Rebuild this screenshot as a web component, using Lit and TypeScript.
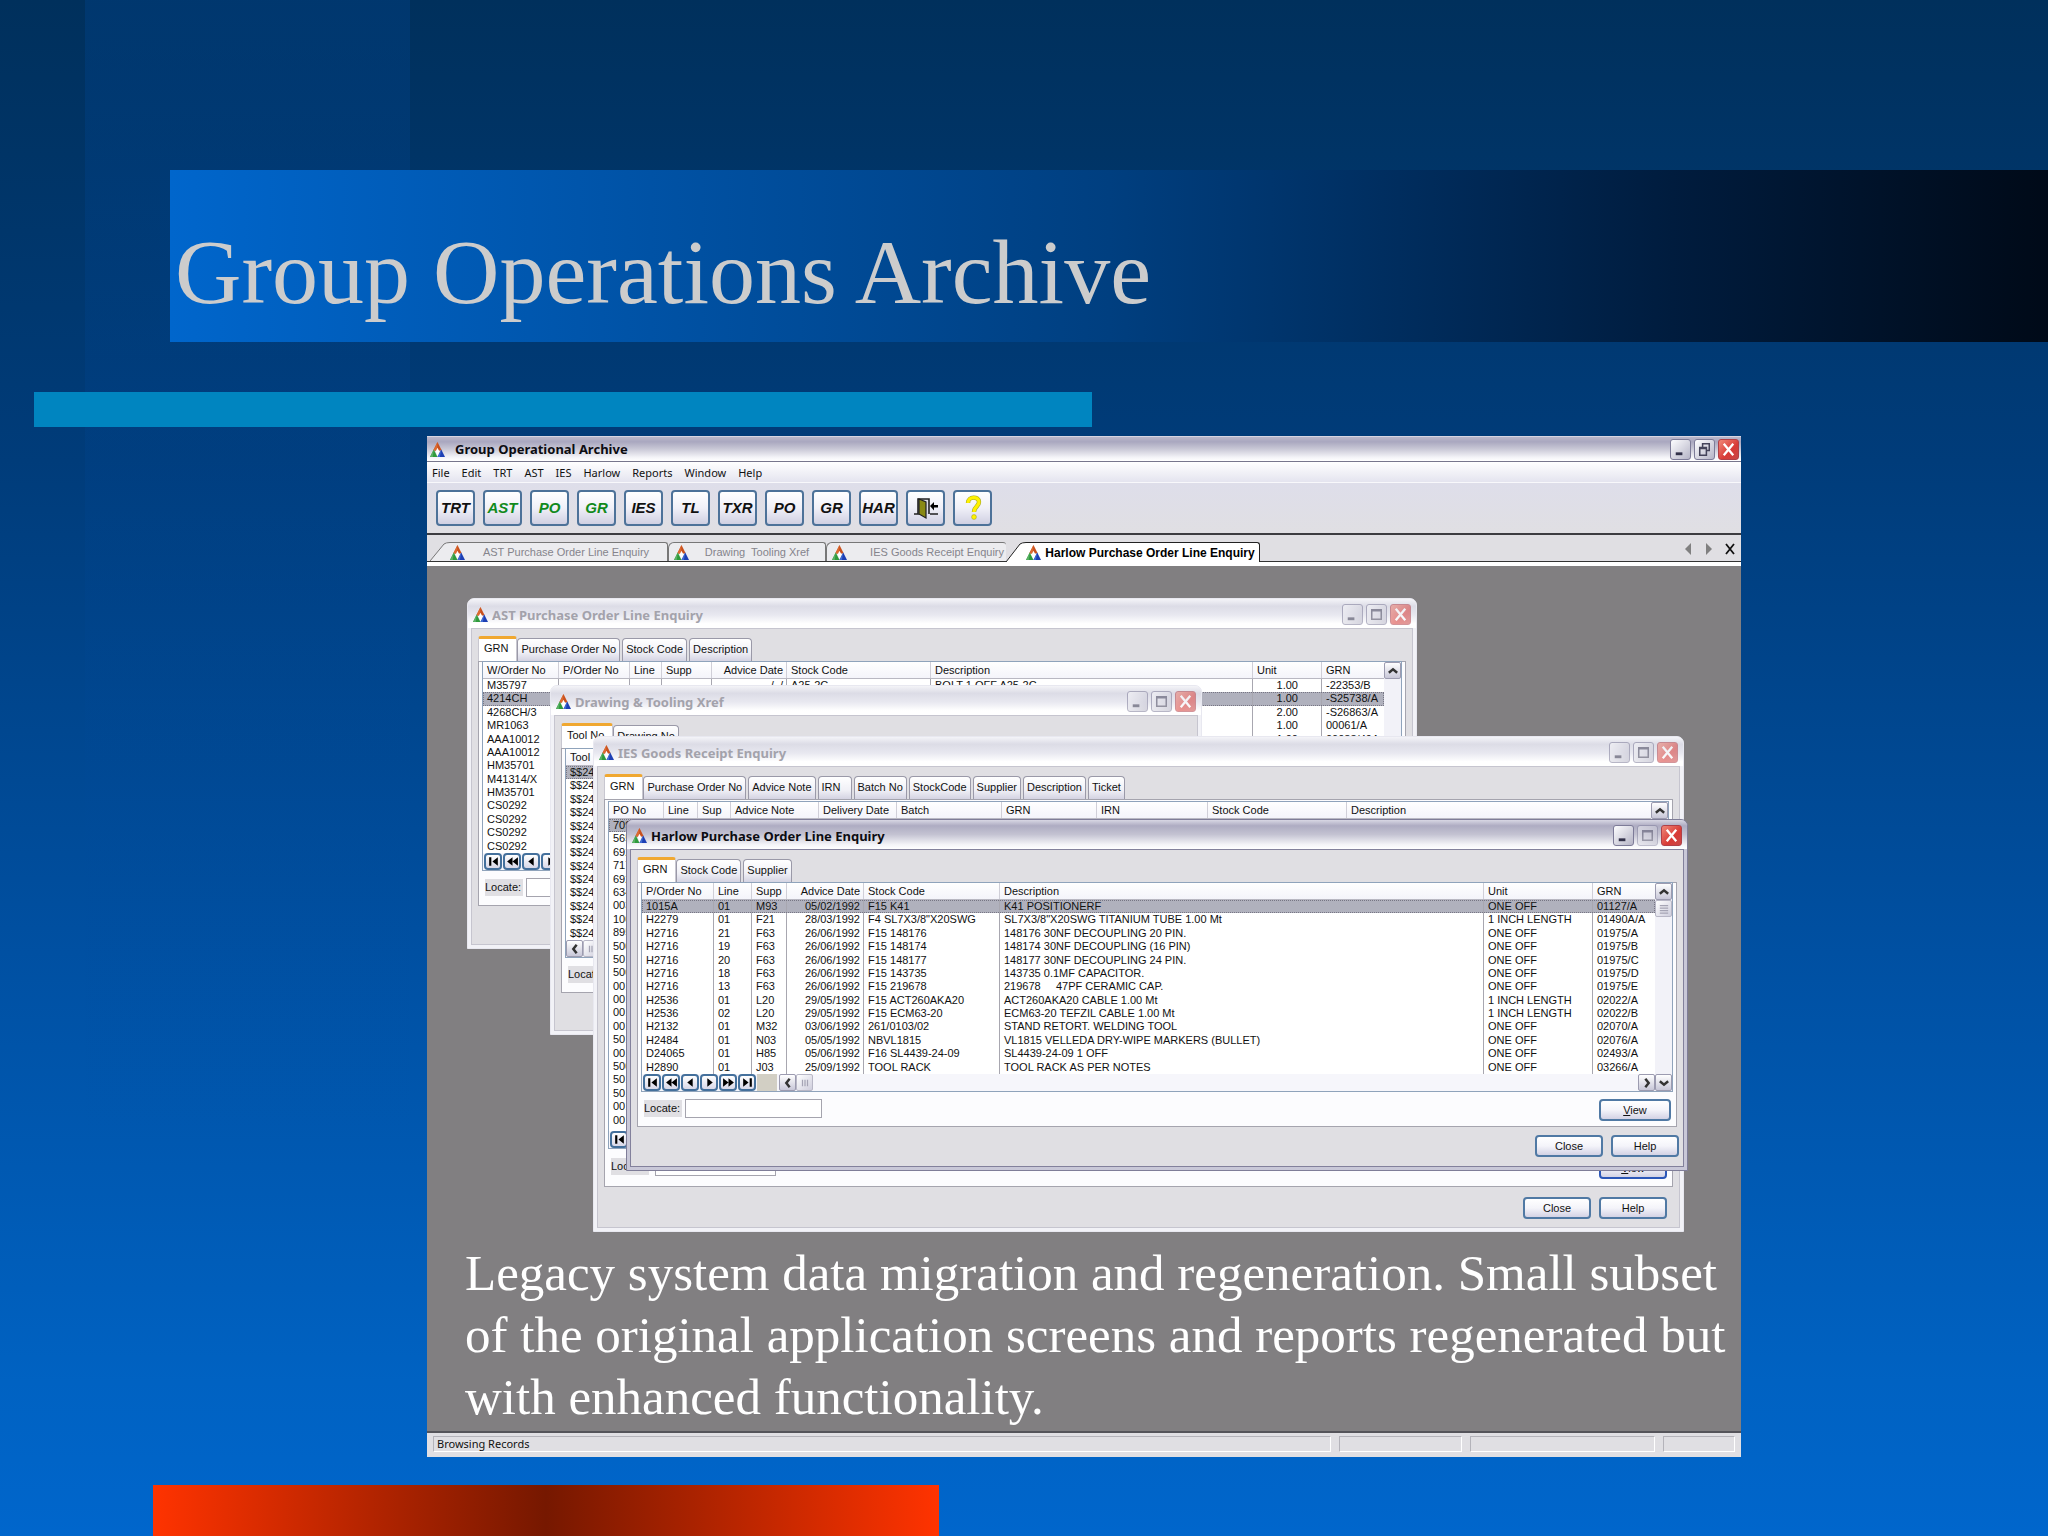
import { LitElement, html, css, svg, nothing } from "lit";
import type { TemplateResult } from "lit";
import { customElement } from "lit/decorators.js";
import { classMap } from "lit/directives/class-map.js";

interface Column {
  label: string;
  width: number;
  right?: boolean;
}

interface WindowSpec {
  id: string;
  title: string;
  active?: boolean;
  tabs: string[];
  columns: Column[];
  rows: string[][];
  selected: number;
  navigator: boolean;
  view: boolean;
}

const repeatRows = (values: string[]): string[][] => values.map((v) => [v]);

const AST: WindowSpec = {
  id: "ast",
  title: "AST Purchase Order Line Enquiry",
  tabs: ["GRN", "Purchase Order No", "Stock Code", "Description"],
  columns: [
    { label: "W/Order No", width: 76 },
    { label: "P/Order No", width: 71 },
    { label: "Line", width: 32 },
    { label: "Supp", width: 50 },
    { label: "Advice Date", width: 75, right: true },
    { label: "Stock Code", width: 144 },
    { label: "Description", width: 322 },
    { label: "Unit", width: 69 },
    { label: "GRN", width: 0 },
  ],
  rows: [
    ["M35797", "", "", "", "/  /", "A25-2C", "BOLT 1 OFF A25-2C", "1.00", "-22353/B"],
    ["4214CH", "", "", "", "", "", "", "1.00", "-S25738/A"],
    ["4268CH/3", "", "", "", "", "", "", "2.00", "-S26863/A"],
    ["MR1063", "", "", "", "", "", "", "1.00", "00061/A"],
    ["AAA10012", "", "", "", "", "", "", "1.00", "00083/49A"],
    ...repeatRows(["AAA10012", "HM35701", "M41314/X", "HM35701", "CS0292", "CS0292", "CS0292", "CS0292"]),
  ],
  selected: 1,
  navigator: true,
  view: false,
};

const DRAWING: WindowSpec = {
  id: "drawing",
  title: "Drawing & Tooling Xref",
  tabs: ["Tool No", "Drawing No"],
  columns: [{ label: "Tool No", width: 0 }],
  rows: repeatRows(Array(13).fill("$$24")),
  selected: 0,
  navigator: false,
  view: false,
};

const IES: WindowSpec = {
  id: "ies",
  title: "IES Goods Receipt Enquiry",
  tabs: ["GRN", "Purchase Order No", "Advice Note", "IRN", "Batch No", "StockCode", "Supplier", "Description", "Ticket"],
  columns: [
    { label: "PO No", width: 55 },
    { label: "Line", width: 34 },
    { label: "Sup", width: 33 },
    { label: "Advice Note", width: 88 },
    { label: "Delivery Date", width: 78 },
    { label: "Batch", width: 105 },
    { label: "GRN", width: 95 },
    { label: "IRN", width: 111 },
    { label: "Stock Code", width: 139 },
    { label: "Description", width: 0 },
  ],
  rows: repeatRows([
    "709", "565", "692", "717", "692", "634", "003", "100", "895", "500", "501", "500",
    "001", "001", "001", "001", "501", "001", "500", "501", "501", "001", "001",
  ]),
  selected: 0,
  navigator: true,
  view: true,
};

const HARLOW: WindowSpec = {
  id: "harlow",
  title: "Harlow Purchase Order Line Enquiry",
  active: true,
  tabs: ["GRN", "Stock Code", "Supplier"],
  columns: [
    { label: "P/Order No", width: 72 },
    { label: "Line", width: 38 },
    { label: "Supp", width: 35 },
    { label: "Advice Date", width: 77, right: true },
    { label: "Stock Code", width: 136 },
    { label: "Description", width: 484 },
    { label: "Unit", width: 109 },
    { label: "GRN", width: 0 },
  ],
  rows: [
    ["1015A", "01", "M93", "05/02/1992", "F15 K41", "K41 POSITIONERF", "ONE OFF", "01127/A"],
    ["H2279", "01", "F21", "28/03/1992", "F4 SL7X3/8\"X20SWG", "SL7X3/8\"X20SWG TITANIUM TUBE 1.00 Mt", "1 INCH LENGTH", "01490A/A"],
    ["H2716", "21", "F63", "26/06/1992", "F15 148176", "148176 30NF DECOUPLING 20 PIN.", "ONE OFF", "01975/A"],
    ["H2716", "19", "F63", "26/06/1992", "F15 148174", "148174 30NF DECOUPLING (16 PIN)", "ONE OFF", "01975/B"],
    ["H2716", "20", "F63", "26/06/1992", "F15 148177", "148177 30NF DECOUPLING 24 PIN.", "ONE OFF", "01975/C"],
    ["H2716", "18", "F63", "26/06/1992", "F15 143735", "143735 0.1MF CAPACITOR.", "ONE OFF", "01975/D"],
    ["H2716", "13", "F63", "26/06/1992", "F15 219678", "219678     47PF CERAMIC CAP.", "ONE OFF", "01975/E"],
    ["H2536", "01", "L20", "29/05/1992", "F15 ACT260AKA20", "ACT260AKA20 CABLE 1.00 Mt", "1 INCH LENGTH", "02022/A"],
    ["H2536", "02", "L20", "29/05/1992", "F15 ECM63-20", "ECM63-20 TEFZIL CABLE 1.00 Mt", "1 INCH LENGTH", "02022/B"],
    ["H2132", "01", "M32", "03/06/1992", "261/0103/02", "STAND RETORT. WELDING TOOL", "ONE OFF", "02070/A"],
    ["H2484", "01", "N03", "05/05/1992", "NBVL1815", "VL1815 VELLEDA DRY-WIPE MARKERS (BULLET)", "ONE OFF", "02076/A"],
    ["D24065", "01", "H85", "05/06/1992", "F16 SL4439-24-09", "SL4439-24-09 1 OFF", "ONE OFF", "02493/A"],
    ["H2890", "01", "J03", "25/09/1992", "TOOL RACK", "TOOL RACK AS PER NOTES", "ONE OFF", "03266/A"],
  ],
  selected: 0,
  navigator: true,
  view: true,
};

const MENU = ["File", "Edit", "TRT", "AST", "IES", "Harlow", "Reports", "Window", "Help"];

const TOOLS: { label: string; green?: boolean }[] = [
  { label: "TRT" },
  { label: "AST", green: true },
  { label: "PO", green: true },
  { label: "GR", green: true },
  { label: "IES" },
  { label: "TL" },
  { label: "TXR" },
  { label: "PO" },
  { label: "GR" },
  { label: "HAR" },
];

const NAV_ICONS: { name: string; shape: TemplateResult }[] = [
  { name: "First", shape: svg`<path d="M2 2h2v8H2zM10 2v8L5 6z"/>` },
  { name: "Page back", shape: svg`<path d="M6 2v8L1 6zM11 2v8L6 6z"/>` },
  { name: "Previous", shape: svg`<path d="M8 2v8L3 6z"/>` },
  { name: "Next", shape: svg`<path d="M4 2v8l5-4z"/>` },
  { name: "Page forward", shape: svg`<path d="M1 2v8l5-4zM6 2v8l5-4z"/>` },
  { name: "Last", shape: svg`<path d="M2 2v8l5-4zM8 2h2v8H8z"/>` },
];

const logo = () => html`
  <svg class="logo" viewBox="0 0 16 16" aria-hidden="true">
    <path d="M8 0l4.500 9h-9z" fill="#c8501e" />
    <path d="M8 0l-.5 9h-4z" fill="#dc6a30" />
    <path d="M4 8l4 8H0z" fill="#2f9a3c" />
    <path d="M4 8l-1 8H0z" fill="#58b064" />
    <path d="M12 8l4 8H8z" fill="#1d3fb4" />
    <path d="M12 8l-1.500 8H8z" fill="#3f6cd4" />
    <path d="M8 6l2 4-2 5-2-5z" fill="#fff" />
  </svg>
`;

const chevron = (points: string) => html`
  <svg viewBox="0 0 12 12" aria-hidden="true">
    <polyline points=${points} fill="none" stroke="#333" stroke-width="3" />
  </svg>
`;

const windowButtons = (middle: "max" | "restore") => html`
  <div class="window-buttons">
    <button class="wb" aria-label="Minimise">
      <svg viewBox="0 0 20 20"><rect x="5" y="13" width="7" height="3" class="glyph" /></svg>
    </button>
    <button class="wb middle" aria-label="Maximise">
      ${middle === "max"
        ? html`<svg viewBox="0 0 20 20"><path d="M5 5h10v10H5zM5 6h10" fill="none" stroke-width="1.6" class="line" /></svg>`
        : html`<svg viewBox="0 0 20 20">
            <path d="M8 7V4h7v7h-3M5 8h7v8H5zM5 9h7" fill="none" stroke-width="1.6" class="line" />
          </svg>`}
    </button>
    <button class="wb close" aria-label="Close window">
      <svg viewBox="0 0 20 20"><path d="M5 4l10 12M15 4L5 16" stroke="#fff" stroke-width="2.4" /></svg>
    </button>
  </div>
`;

@customElement("app-root")
export class AppRoot extends LitElement {
  static styles = css`
    :host {
      display: block;
      font-family: "Liberation Sans", sans-serif;
      font-size: 11px;
      line-height: 16px;
      color: #111;
    }
    * {
      box-sizing: border-box;
    }
    button,
    input {
      font: inherit;
      color: inherit;
      margin: 0;
      padding: 0;
    }
    .slide {
      min-height: 100vh;
      display: flex;
      flex-direction: column;
      overflow: hidden;
      background:
        linear-gradient(rgba(0, 74, 158, 0.28), rgba(0, 74, 158, 0) 75%) 85px 0 / 325px 100% no-repeat,
        linear-gradient(#00305c, #003c7a 30%, #0050a2 62%, #0062c2 90%, #0066cc);
    }
    .banner {
      margin: 170px 0 0 170px;
      height: 172px;
      padding: 52px 0 0 5px;
      background: linear-gradient(90deg, #0066cc, #003f80 50%, #001c3e 80%, #000a18);
    }
    .banner h1 {
      margin: 0;
      font: 400 92px/100px "Liberation Serif", serif;
      color: #ccc;
      white-space: nowrap;
    }
    .rule {
      margin: 50px 956px 0 34px;
      height: 35px;
      background: #0085c0;
    }
    .app {
      margin: 9px 307px 0 427px;
      border-top: 1px solid #d6d5e2;
      background: #e0dfe3;
    }
    .footer-bar {
      margin: 28px 1109px 0 153px;
      height: 51px;
      background: linear-gradient(90deg, #ff3300, #761800 50%, #ff3300);
    }

    .titlebar {
      display: flex;
      align-items: center;
      gap: 4px;
      background: linear-gradient(#b8b6ca, #a9a7bf 20%, #c9c8d6 50%, #f4f4f8 85%, #fff);
      font: 700 13px/18px "Noto Sans", sans-serif;
      color: #0c0c12;
      white-space: nowrap;
    }
    .titlebar.main {
      height: 25px;
      gap: 10px;
      padding: 0 2px 0 3px;
      border-bottom: 1px solid #77768c;
    }
    .titlebar .name {
      flex: 1;
    }
    .logo {
      width: 15px;
      height: 15px;
      flex: none;
    }
    .window-buttons {
      display: flex;
      gap: 3px;
    }
    .wb {
      width: 21px;
      height: 21px;
      border: 1px solid #7d7b98;
      border-radius: 3px;
      background: linear-gradient(135deg, #fdfdff, #b5b4c6);
      display: grid;
      place-items: center;
    }
    .wb svg {
      width: 19px;
      height: 19px;
    }
    .wb .glyph {
      fill: #33324a;
    }
    .wb .line {
      stroke: #44435a;
    }
    .wb.close {
      border-color: #b04048;
      background: linear-gradient(135deg, #f08878, #d83a36 60%, #c84848);
    }

    .menu {
      display: flex;
      gap: 12px;
      height: 21px;
      padding: 1px 5px;
      font: 11px/17px "Noto Sans", sans-serif;
      background: linear-gradient(#fff, #e4e4ef);
      border-bottom: 1px solid #f8f8fb;
    }
    .menu button {
      border: 0;
      background: none;
    }
    .toolbar {
      display: flex;
      gap: 8px;
      height: 52px;
      padding: 7px 9px;
      background: linear-gradient(#dedeea, #e0dfe3);
      border-bottom: 2px solid #3c3c40;
    }
    .tool {
      width: 39px;
      height: 36px;
      border: 2px solid #4d7299;
      border-radius: 4px;
      background: linear-gradient(#fff, #f0f0f8 50%, #d0d0e2);
      font: italic 700 15px/20px "Liberation Sans", sans-serif;
      display: grid;
      place-items: center;
      place-content: center;
    }
    .tool.green {
      color: #118a1c;
    }
    .tool svg {
      width: 28px;
      height: 26px;
    }

    .mdi-tabs {
      display: flex;
      align-items: flex-end;
      height: 31px;
      padding: 0 6px 4px 3px;
      background: linear-gradient(#e0dfe3 26px, #333 26px, #333 27px, #fff 27px);
    }
    .mdi-tab {
      display: flex;
      align-items: center;
      height: 19px;
      border: 1px solid #777;
      border-width: 1px 1px 0 1px;
      border-radius: 6px 3px 0 0;
      background: #ececef;
      color: #85848c;
      white-space: nowrap;
      margin-bottom: 1px;
      padding: 0 0 0 5px;
    }
    .mdi-tab .name {
      flex: 1;
      text-align: center;
    }
    .slope {
      width: 20px;
      height: 19px;
      flex: none;
      margin-bottom: 1px;
    }
    .slope + .mdi-tab {
      border-left: 0;
      border-radius: 0 3px 0 0;
      padding-left: 0;
    }
    .mdi-tab.one {
      width: 218px;
    }
    .mdi-tab.two {
      width: 158px;
    }
    .mdi-tab.three {
      width: 180px;
      border-right: 0;
      padding-right: 2px;
    }
    .mdi-tab.three .name {
      text-align: right;
    }
    .mdi-tab.four {
      width: 234px;
      border-color: #222;
      color: #000;
      background: #fff;
      font-size: 12px;
      font-weight: 700;
      height: 20px;
      margin-bottom: 0;
    }
    .slope.active {
      height: 20px;
      margin-bottom: 0;
    }
    .mdi-nav {
      margin-left: auto;
      display: flex;
      gap: 11px;
      align-self: center;
    }
    .mdi-nav button {
      border: 0;
      background: none;
      width: 10px;
      height: 14px;
    }
    .mdi-nav svg {
      width: 10px;
      height: 14px;
      display: block;
    }

    .desktop {
      position: relative;
      height: 865px;
      display: flex;
      flex-direction: column;
      justify-content: flex-end;
      background: #817f81;
      overflow: hidden;
    }
    .caption {
      margin: 0;
      padding: 0 0 3px 38px;
      font: 400 51px/62px "Liberation Serif", serif;
      color: #fff;
      white-space: nowrap;
    }

    .status {
      display: flex;
      gap: 8px;
      height: 26px;
      padding: 3px 6px 5px 6px;
      border-top: 2px solid #55545a;
      font: 11px/14px "Noto Sans", sans-serif;
    }
    .status span {
      border: 1px solid #b4b3ba;
      border-right-color: #fff;
      border-bottom-color: #fff;
      padding-left: 3px;
    }
    .status .s1 {
      flex: 1;
    }
    .status .s2 {
      width: 123px;
    }
    .status .s3 {
      width: 185px;
    }
    .status .s4 {
      width: 72px;
    }

    .window {
      position: absolute;
      display: flex;
      flex-direction: column;
      padding: 0 3px 3px;
      border: 1px solid #e8e8f0;
      border-radius: 7px 7px 0 0;
      background: #f2f2f7;
    }
    .window .titlebar {
      height: 29px;
      margin: 0 -3px;
      padding: 2px 5px 0 5px;
      border-radius: 6px 6px 0 0;
      background: linear-gradient(#f4f4f8, #dcdce6 25%, #e8e8f0 55%, #fff 85%);
      color: #a3a2ab;
    }
    .window .wb {
      opacity: 0.55;
    }
    .window.active {
      border-color: #7f7d98;
      background: #c9c8d8;
    }
    .window.active .titlebar {
      background: linear-gradient(#d8d7e4, #aeacc2 20%, #c4c3d2 50%, #f4f4f8 85%, #fff);
      color: #0c0c12;
    }
    .window.active .wb {
      opacity: 1;
    }
    .window.active .wb.middle {
      opacity: 0.45;
    }
    .client {
      flex: 1;
      border: 1px solid #c6c5cf;
      background: #e0dfe3;
      padding: 7px 6px 0;
    }
    .window.active .client {
      border-color: #83819c;
    }
    .ast {
      left: 40px;
      top: 32px;
      width: 950px;
      height: 351px;
    }
    .drawing {
      left: 123px;
      top: 119px;
      width: 652px;
      height: 350px;
    }
    .ies {
      left: 166px;
      top: 170px;
      width: 1091px;
      height: 496px;
    }
    .harlow {
      left: 199px;
      top: 253px;
      width: 1062px;
      height: 352px;
    }

    .tabs {
      display: flex;
      align-items: flex-end;
      height: 25px;
      gap: 2px;
      white-space: nowrap;
    }
    .tabs button {
      height: 23px;
      min-width: 34px;
      padding: 0 3px 2px;
      border: 1px solid #9a99a8;
      border-bottom: 0;
      border-radius: 4px 4px 0 0;
      background: linear-gradient(#fff, #f0f0f6 60%, #d4d3e2);
      text-align: left;
    }
    .tabs button.current {
      height: 25px;
      padding: 0 8px 5px 5px;
      margin-right: -2px;
      border-color: #c8c7d0;
      border-top: 3px solid #f0a830;
      border-radius: 3px 3px 0 0;
      background: #fff;
    }
    .panel {
      border: 1px solid #a5a4ae;
      background: #fcfcfe;
      padding: 0 3px 6px;
    }
    .ies .panel {
      padding-top: 2px;
    }
    .list {
      display: flex;
      border: 1px solid #8fa3bb;
      background: #fff;
    }
    .panel .list {
      margin-top: -1px;
    }
    .list-main {
      flex: 1;
      min-width: 0;
    }
    table {
      display: block;
      width: 100%;
    }
    thead {
      display: block;
      height: 17px;
      background: linear-gradient(#fff, #f4f4fa);
      border-bottom: 1px solid #b9b8c2;
    }
    tbody {
      display: grid;
      grid-auto-rows: 1fr;
      height: 174px;
    }
    .ies tbody {
      height: 308px;
    }
    tr {
      display: flex;
      min-height: 0;
    }
    th,
    td {
      flex: none;
      padding: 0 3px 0 4px;
      font-weight: 400;
      text-align: left;
      white-space: pre;
      line-height: 16px;
      border-right: 1px solid #a8a7b0;
    }
    td {
      line-height: 13px;
      height: 100%;
    }
    th {
      border-right-color: #d0cfd8;
    }
    th:last-child,
    td:last-child {
      flex: 1;
      border-right: 0;
    }
    td.right,
    th.right {
      text-align: right;
      padding-right: 3px;
    }
    td.number {
      text-align: right;
      padding-right: 23px;
    }
    tr.selected {
      background: #b0b1bd;
      outline: 1px dotted #777684;
      outline-offset: -1px;
    }
    .bottom {
      display: flex;
      height: 17px;
      background: #f6f6fb;
    }
    .nav {
      display: flex;
      gap: 1px;
      padding-left: 1px;
    }
    .nav button {
      width: 18px;
      height: 17px;
      border: 2px solid #44709c;
      border-radius: 4px;
      background: linear-gradient(#fff, #d8d8e8);
      display: grid;
      place-items: center;
      place-content: center;
    }
    .nav svg {
      width: 13px;
      height: 13px;
    }
    .filler {
      width: 20px;
      margin: 0 2px 0 1px;
      background: #d2cfc4;
    }
    .sb {
      width: 17px;
      height: 17px;
      flex: none;
      border: 1px solid #9c9bb0;
      border-radius: 2px;
      background: linear-gradient(#fff, #c8c7d8);
      display: grid;
      place-items: center;
    }
    .sb svg {
      width: 10px;
      height: 10px;
    }
    .thumb {
      border-color: #b8b7c6;
      background: linear-gradient(135deg, #fff, #cfcedd);
    }
    .push {
      margin-left: auto;
    }
    .vscroll {
      width: 17px;
      flex: none;
      display: flex;
      flex-direction: column;
      background: #f2f2f8;
    }
    .vscroll .end {
      margin-top: auto;
    }
    .locate {
      display: flex;
      justify-content: space-between;
      align-items: flex-start;
      padding: 7px 2px 0 3px;
      height: 28px;
    }
    .locate label {
      display: flex;
      align-items: center;
      gap: 3px;
    }
    .locate .word {
      background: #e0dfe3;
      height: 17px;
      width: 38px;
    }
    .locate input {
      width: 137px;
      height: 19px;
      border: 1px solid #a5a4ae;
      background: #fff;
    }
    .ies .gap {
      height: 4px;
    }
    .ies .locate {
      padding-top: 8px;
      height: 31px;
    }
    .ies .locate label {
      gap: 6px;
    }
    .ies .locate input {
      width: 121px;
    }
    .action {
      width: 68px;
      height: 22px;
      border: 2px solid #5079a4;
      border-radius: 4px;
      background: linear-gradient(#fff, #f4f4fa 50%, #d3d2e4);
      line-height: 16px;
    }
    .view {
      width: 72px;
    }
    .ies .view {
      width: 68px;
      border-color: #2c57b8;
    }
    .footer {
      display: flex;
      justify-content: flex-end;
      gap: 8px;
      padding-top: 8px;
      margin-right: -2px;
    }
    .ies .footer {
      padding: 10px 8px 0 0;
    }
  `;

  private renderList(w: WindowSpec) {
    const cellClass = (c: Column) => classMap({ right: !!c.right, number: w.id === "ast" && c.label === "Unit" });
    const width = (c: Column) => (c.width ? `width:${c.width}px` : nothing);
    return html`
      <div class="list">
        <div class="list-main">
          <table>
            <thead>
              <tr>
                ${w.columns.map((c) => html`<th class=${c.right ? "right" : ""} style=${width(c)}>${c.label}</th>`)}
              </tr>
            </thead>
            <tbody>
              ${w.rows.map(
                (row, r) => html`<tr class=${r === w.selected ? "selected" : ""}>
                  ${w.columns.map((c, i) => html`<td class=${cellClass(c)} style=${width(c)}>${row[i] ?? ""}</td>`)}
                </tr>`,
              )}
            </tbody>
          </table>
          <div class="gap"></div>
          <div class="bottom">
            ${w.navigator
              ? html`<div class="nav">
                    ${NAV_ICONS.map((n) => html`<button aria-label=${n.name}><svg viewBox="0 0 12 12">${n.shape}</svg></button>`)}
                  </div>
                  <span class="filler"></span>`
              : nothing}
            <button class="sb" aria-label="Scroll left">${chevron("8,1 4,6 8,11")}</button>
            <span class="sb thumb">
              <svg viewBox="0 0 12 12"><path d="M3 2v8M6 2v8M9 2v8" stroke="#a5a4b4" stroke-width="1.5" /></svg>
            </span>
            <button class="sb push" aria-label="Scroll right">${chevron("4,1 8,6 4,11")}</button>
          </div>
        </div>
        <div class="vscroll">
          <button class="sb" aria-label="Scroll up">${chevron("1,8 6,4 11,8")}</button>
          ${w.active
            ? html`<span class="sb thumb">
                <svg viewBox="0 0 12 12"><path d="M1 2h10M1 5h10M1 8h10M1 11h10" stroke="#a5a4b4" stroke-width="1.5" /></svg>
              </span>`
            : nothing}
          <button class="sb end" aria-label="Scroll down">${chevron("1,4 6,8 11,4")}</button>
        </div>
      </div>
    `;
  }

  private renderWindow(w: WindowSpec) {
    return html`
      <section class="window ${w.id} ${w.active ? "active" : ""}">
        <div class="titlebar">${logo()}<span class="name">${w.title}</span>${windowButtons("max")}</div>
        <div class="client">
          <div class="tabs">
            ${w.tabs.map((t, i) => html`<button class=${i === 0 ? "current" : ""}>${t}</button>`)}
          </div>
          <div class="panel">
            ${this.renderList(w)}
            <div class="locate">
              <label><span class="word">Locate:</span><input type="text" /></label>
              ${w.view ? html`<button class="action view"><u>V</u>iew</button>` : nothing}
            </div>
          </div>
          <div class="footer">
            <button class="action">Close</button>
            <button class="action">Help</button>
          </div>
        </div>
      </section>
    `;
  }

  render() {
    return html`
      <main class="slide">
        <header class="banner"><h1>Group Operations Archive</h1></header>
        <div class="rule"></div>
        <section class="app">
          <div class="titlebar main">
            ${logo()}<span class="name">Group Operational Archive</span>${windowButtons("restore")}
          </div>
          <nav class="menu">${MENU.map((m) => html`<button>${m}</button>`)}</nav>
          <div class="toolbar">
            ${TOOLS.map((t) => html`<button class="tool ${t.green ? "green" : ""}">${t.label}</button>`)}
            <button class="tool" aria-label="Exit">
              <svg viewBox="0 0 28 26">
                <path d="M2 19h6M18 19h8" stroke="#222" stroke-width="1.6" />
                <path d="M6 19V4h11v15" fill="#dcdce6" stroke="#222" stroke-width="1.6" />
                <path d="M7 4l7 3v16l-7-4z" fill="#8a8a14" stroke="#222" stroke-width="1.2" />
                <path d="M18 11l4-4v3h4v2.400h-4v3z" fill="#000" />
              </svg>
            </button>
            <button class="tool" aria-label="Help">
              <svg viewBox="0 0 28 26">
                <path d="M9 8c0-7 11-7 11-1 0 4-5 5-5 10" fill="none" stroke="#a8a820" stroke-width="4.400" />
                <path d="M9 8c0-7 11-7 11-1 0 4-5 5-5 10" fill="none" stroke="#fff200" stroke-width="3.200" />
                <circle cx="15" cy="22" r="2.400" fill="#fff200" stroke="#a8a820" stroke-width="0.600" />
              </svg>
            </button>
          </div>
          <div class="mdi-tabs">
            <svg class="slope" viewBox="0 0 20 19"><path d="M0 19L14 2Q16 0 20 0V19z" fill="#ececef" /><path d="M0 19L14 2Q16 .5 20 .5" fill="none" stroke="#777" /></svg>
            <button class="mdi-tab one">${logo()}<span class="name">AST Purchase Order Line Enquiry</span></button>
            <button class="mdi-tab two">${logo()}<span class="name">Drawing&nbsp; Tooling Xref</span></button>
            <button class="mdi-tab three">${logo()}<span class="name">IES Goods Receipt Enquiry</span></button>
            <svg class="slope active" viewBox="0 0 20 20"><path d="M0 20L14 2Q16 0 20 0V20z" fill="#fff" /><path d="M0 20L14 2Q16 .5 20 .5" fill="none" stroke="#222" /></svg>
            <button class="mdi-tab four">${logo()}<span class="name">Harlow Purchase Order Line Enquiry</span></button>
            <div class="mdi-nav">
              <button aria-label="Previous tab"><svg viewBox="0 0 10 14"><path d="M8 1v12L2 7z" fill="#808080" /></svg></button>
              <button aria-label="Next tab"><svg viewBox="0 0 10 14"><path d="M2 1v12l6-6z" fill="#808080" /></svg></button>
              <button aria-label="Close tab"><svg viewBox="0 0 10 14"><path d="M1 2l8 10M9 2L1 12" stroke="#111" stroke-width="1.800" /></svg></button>
            </div>
          </div>
          <div class="desktop">
            ${[AST, DRAWING, IES, HARLOW].map((w) => this.renderWindow(w))}
            <p class="caption">
              Legacy system data migration and regeneration. Small subset<br />of the original application screens and
              reports regenerated but<br />with enhanced functionality.
            </p>
          </div>
          <div class="status">
            <span class="s1">Browsing Records</span><span class="s2"></span><span class="s3"></span><span class="s4"></span>
          </div>
        </section>
        <div class="footer-bar"></div>
      </main>
    `;
  }
}
